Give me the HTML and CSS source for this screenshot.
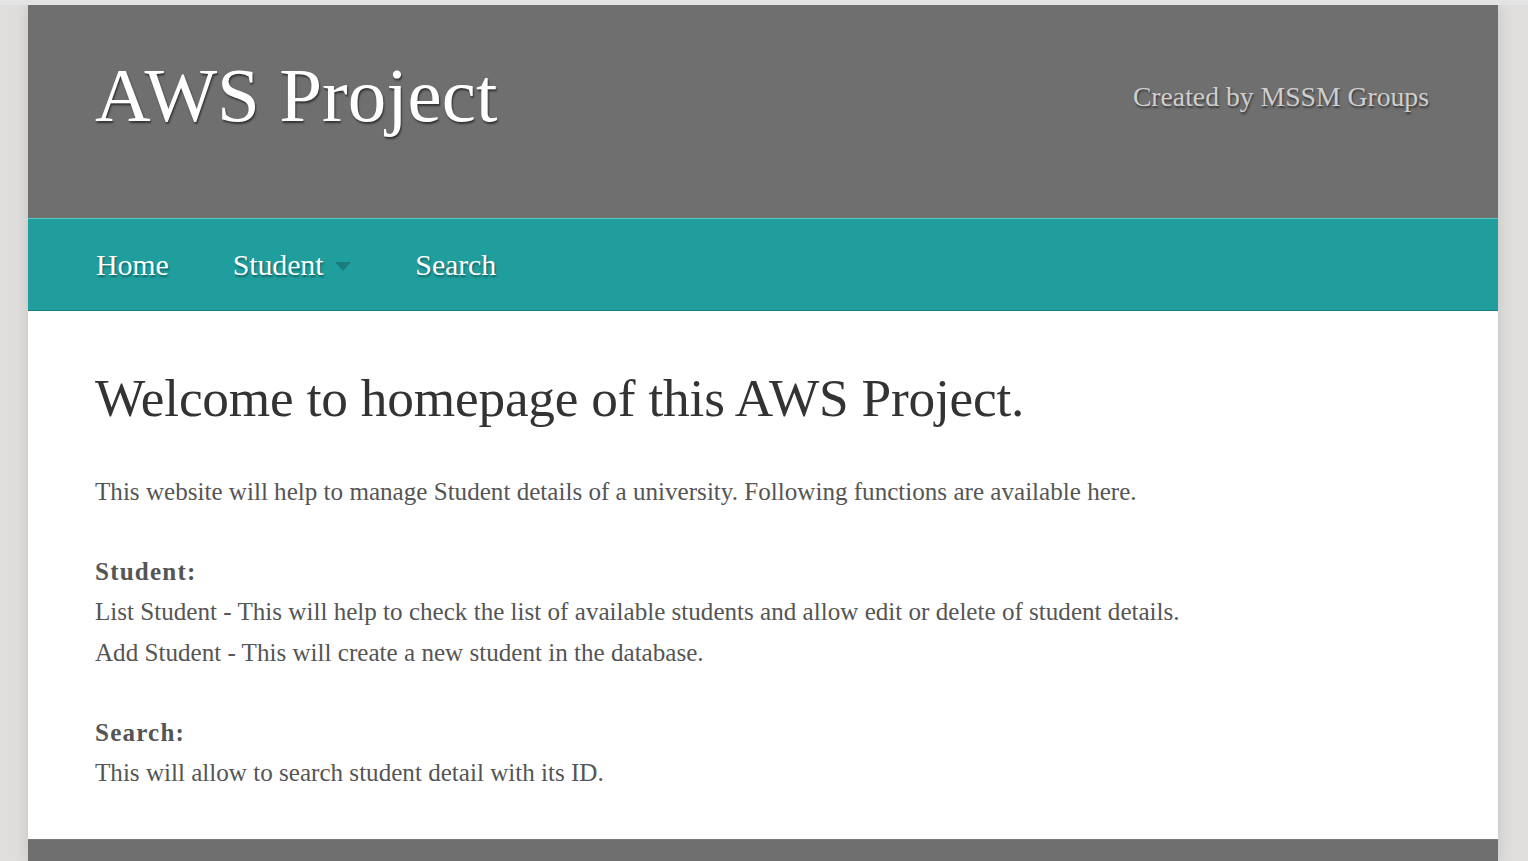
FILE: index.html
```html
<!DOCTYPE html>
<html>
<head>
<meta charset="utf-8">
<title>AWS Project</title>
<link rel="stylesheet" href="styles.css">
</head>
<body>
<div class="page">
  <header class="site-header">
    <h1 class="site-title">AWS Project</h1>
    <p class="site-credit">Created by MSSM Groups</p>
  </header>
  <nav class="main-nav">
    <a class="nav-item" href="#">Home</a>
    <a class="nav-item nav-dropdown" href="#">Student<span class="caret"></span></a>
    <a class="nav-item" href="#">Search</a>
  </nav>
  <main class="content">
    <h2 class="welcome">Welcome to homepage of this AWS Project.</h2>
    <p class="para">This website will help to manage Student details of a university. Following functions are available here.</p>
    <p class="para">
      <strong class="label">Student:</strong><br>
      List Student - This will help to check the list of available students and allow edit or delete of student details.<br>
      Add Student - This will create a new student in the database.
    </p>
    <p class="para">
      <strong class="label">Search:</strong><br>
      This will allow to search student detail with its ID.
    </p>
  </main>
  <footer class="site-footer"></footer>
</div>
</body>
</html>
```
FILE: styles.css
```css
html, body {
  margin: 0;
  padding: 0;
}
body {
  background: #e0dedd;
  border-top: 5px solid #e4e4e4;
  padding: 0 30px 0 28px;
  font-family: "Liberation Serif", "Times New Roman", serif;
  overflow: hidden;
}
.page {
  background: #ffffff;
  box-shadow: 0 0 14px rgba(0, 0, 0, 0.12);
}
.site-header {
  background: #6f6f6f;
  height: 213px;
  box-sizing: border-box;
  padding: 52px 69px 0 67px;
  display: flex;
  justify-content: space-between;
  align-items: flex-start;
}
.site-title {
  margin: 0;
  font-size: 77px;
  line-height: 77px;
  font-weight: normal;
  color: #ffffff;
  text-shadow: 1px 2px 2px rgba(0, 0, 0, 0.55);
}
.site-credit {
  margin: 26px 0 0 0;
  font-size: 27.7px;
  line-height: 28px;
  color: #cfcfcf;
  text-shadow: 1px 2px 2px rgba(0, 0, 0, 0.5);
}
.main-nav {
  background: #209e9e;
  border-top: 1px solid #55c8c8;
  border-bottom: 1px solid #17807f;
  height: 91px;
  display: flex;
  align-items: center;
  padding-left: 68px;
  gap: 64px;
}
.nav-item {
  font-size: 30px;
  line-height: 91px;
  color: #ffffff;
  text-decoration: none;
  letter-spacing: -0.15px;
  text-shadow: 1px 2px 2px rgba(0, 60, 60, 0.6);
  display: flex;
  align-items: center;
}
.caret {
  width: 0;
  height: 0;
  margin-left: 12px;
  margin-top: 4px;
  border-left: 8.5px solid transparent;
  border-right: 8.5px solid transparent;
  border-top: 9px solid #1b7c7c;
}
.content {
  padding: 56px 67px 45px 67px;
  color: #555555;
  font-size: 25.1px;
  line-height: 40.5px;
}
.welcome {
  margin: 0 0 40.5px 0;
  font-size: 53.3px;
  line-height: 64px;
  font-weight: normal;
  color: #333333;
  letter-spacing: -0.2px;
}
.para {
  margin: 0 0 39.5px 0;
}
.para:last-child {
  margin-bottom: 0;
}
.label {
  font-weight: bold;
  letter-spacing: 1.2px;
}
.site-footer {
  background: #6f6f6f;
  border-top: 1px solid #7a7a7a;
  height: 22px;
}
```
